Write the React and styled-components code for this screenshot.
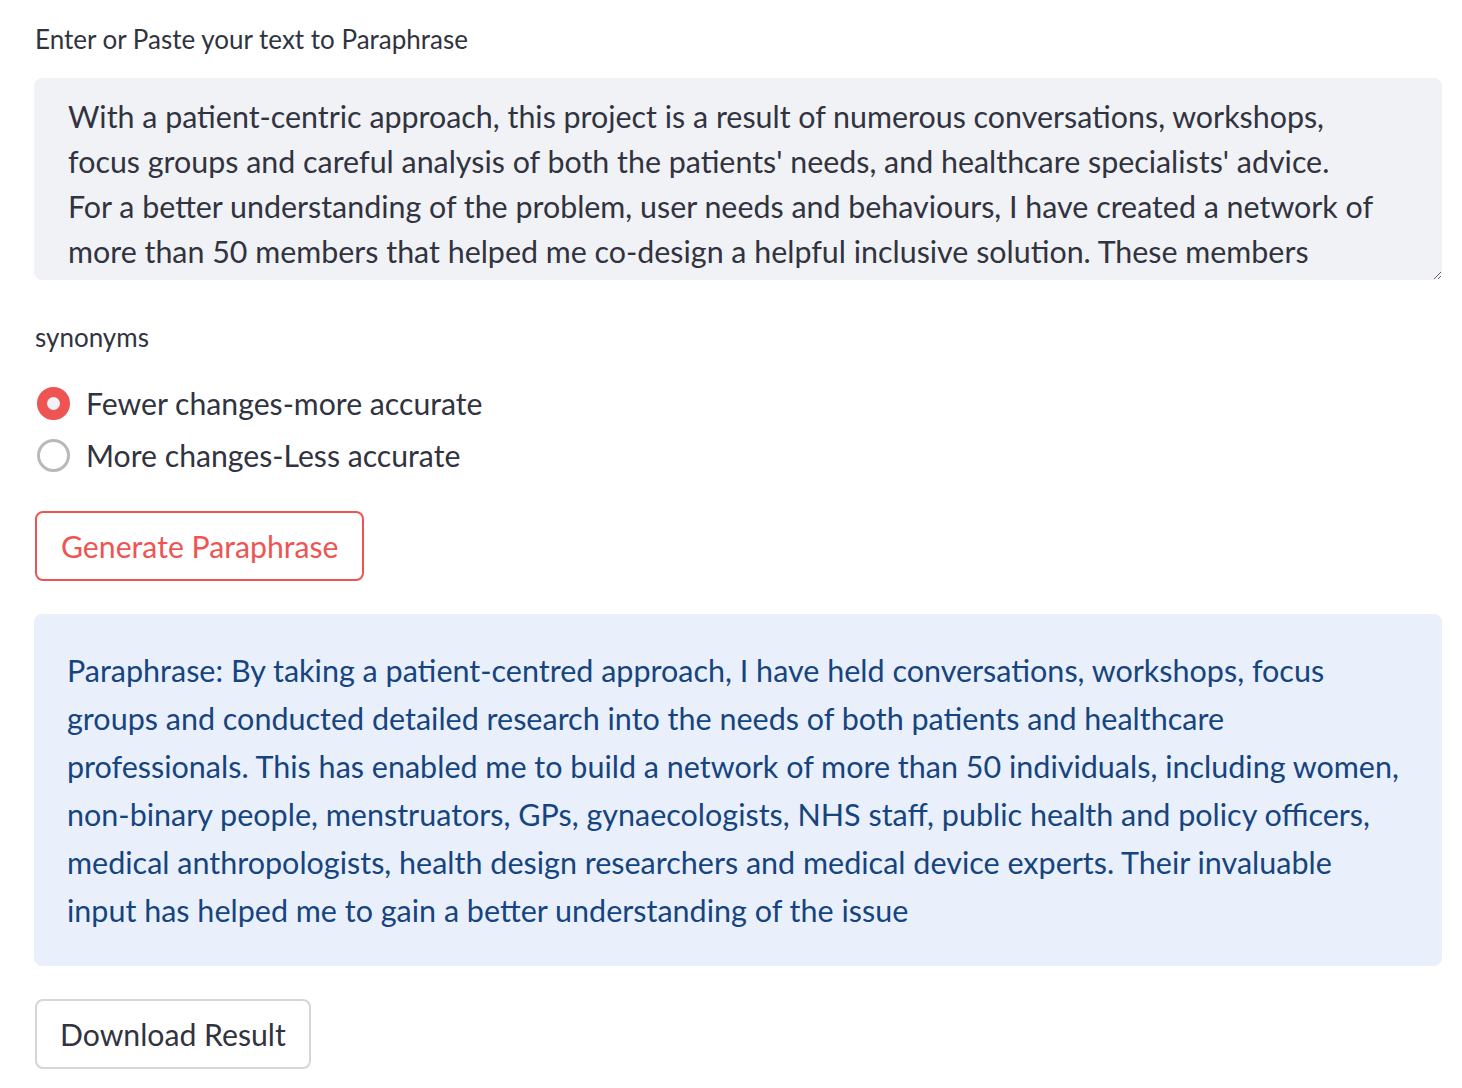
import styled, { createGlobalStyle } from "styled-components";

const ink = "#31333f";
const red = "#ee5552";

const GlobalStyle = createGlobalStyle`
  body {
    margin: 0;
    background: #fff;
    font-family: Lato, "Noto Sans", sans-serif;
    color: ${ink};
  }
`;

const Page = styled.div`
  display: flex;
  flex-direction: column;
  width: 1408px;
  padding: 22px 0 0 34px;
`;

const Label = styled.label`
  font-size: 26px;
  line-height: 34px;
  margin: 0 0 ${({ $gap }) => $gap}px 1px;
`;

const TextArea = styled.textarea`
  box-sizing: border-box;
  width: 100%;
  height: 202px;
  margin: 0 0 40px;
  padding: 16px 34px;
  border: none;
  border-radius: 8px;
  background: #f0f2f6;
  color: ${ink};
  font-family: inherit;
  font-size: 30.4px;
  line-height: 45px;
  resize: vertical;
  overflow: hidden;
  outline: none;
`;

const RadioGroup = styled.div`
  display: flex;
  flex-direction: column;
  gap: 8px;
  margin: 5px 0 34px;
`;

const Option = styled.div`
  display: flex;
  align-items: center;
  gap: 16px;
  height: 44px;
  font-size: 30.2px;
`;

const Dot = styled.span`
  box-sizing: border-box;
  width: 33px;
  height: 33px;
  margin-left: 3px;
  border-radius: 50%;
  flex-shrink: 0;
  border: ${({ $on }) => ($on ? `10px solid ${red}` : "3px solid #b9b9bd")};
  background: ${({ $on }) => ($on ? "#f0f2f6" : "#fff")};
`;

const Button = styled.button`
  align-self: flex-start;
  height: 70px;
  margin: 0 0 ${({ $gap }) => $gap}px 1px;
  padding: 0 ${({ $pad }) => $pad}px;
  border-radius: 8px;
  border: 2px solid ${({ $primary }) => ($primary ? red : "#d6d6d9")};
  background: #fff;
  color: ${({ $primary }) => ($primary ? red : ink)};
  font-family: inherit;
  font-size: 30.2px;
`;

const Info = styled.div`
  box-sizing: border-box;
  width: 100%;
  margin-bottom: 33px;
  padding: 32px 33px 32px;
  border-radius: 8px;
  background: #e9f0fb;
  color: #16447f;
  font-size: 30.5px;
  line-height: 48px;
  white-space: pre-line;
`;

const source = [
  "With a patient-centric approach, this project is a result of numerous conversations, workshops,",
  "focus groups and careful analysis of both the patients' needs, and healthcare specialists' advice.",
  "For a better understanding of the problem, user needs and behaviours, I have created a network of",
  "more than 50 members that helped me co-design a helpful inclusive solution. These members",
  "include women, non-binary people, menstruators, GPs, gynaecologists, NHS staff, public health and",
  "policy officers, medical anthropologists, health design researchers and medical device experts.",
].join("\n");

const result = [
  "Paraphrase: By taking a patient-centred approach, I have held conversations, workshops, focus",
  "groups and conducted detailed research into the needs of both patients and healthcare",
  "professionals. This has enabled me to build a network of more than 50 individuals, including women,",
  "non-binary people, menstruators, GPs, gynaecologists, NHS staff, public health and policy officers,",
  "medical anthropologists, health design researchers and medical device experts. Their invaluable",
  "input has helped me to gain a better understanding of the issue",
].join("\n");

export default function App() {
  return (
    <>
      <GlobalStyle />
      <Page>
        <Label $gap={22}>Enter or Paste your text to Paraphrase</Label>
        <TextArea readOnly value={source} />
        <Label $gap={22}>synonyms</Label>
        <RadioGroup role="radiogroup">
          <Option>
            <Dot $on />
            Fewer changes-more accurate
          </Option>
          <Option>
            <Dot />
            More changes-Less accurate
          </Option>
        </RadioGroup>
        <Button $primary $pad={24} $gap={33}>Generate Paraphrase</Button>
        <Info>{result}</Info>
        <Button $pad={23} $gap={20}>Download Result</Button>
      </Page>
    </>
  );
}
